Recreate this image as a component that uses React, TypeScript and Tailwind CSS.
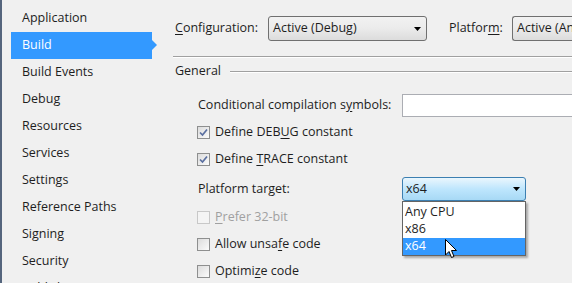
import React from "react";

const font = { fontFamily: '"Open Sans", "Noto Sans", sans-serif' };

function U({ children }: { children: React.ReactNode }) {
  return <span className="underline underline-offset-2">{children}</span>;
}

function Check({ checked, disabled }: { checked?: boolean; disabled?: boolean }) {
  return (
    <div
      className={
        "w-[13px] h-[13px] shrink-0 border flex items-center justify-center " +
        (disabled
          ? "border-[#c8c8c8] bg-[#f4f4f4]"
          : "border-[#8e8f8f] bg-gradient-to-br from-[#dcdcdc] to-[#fbfbfb]")
      }
    >
      {checked && (
        <svg width="9" height="9" viewBox="0 0 9 9">
          <path d="M1 4.5 L3.5 7 L8 1.5" stroke="#5a6fa0" strokeWidth="1.7" fill="none" />
        </svg>
      )}
    </div>
  );
}

function Arrow() {
  return (
    <svg width="7" height="4" viewBox="0 0 7 4">
      <path d="M0 0 H7 L3.5 4 Z" fill="#000" />
    </svg>
  );
}

export default function App() {
  const items = [
    "Application",
    "Build",
    "Build Events",
    "Debug",
    "Resources",
    "Services",
    "Settings",
    "Reference Paths",
    "Signing",
    "Security",
    "Publish",
  ];
  return (
    <div
      className="w-[572px] h-[283px] overflow-hidden bg-[#f0f0f0] flex text-[12.5px] text-[#1e1e1e]"
      style={font}
    >
      <div className="w-[2px] h-full bg-[#55657d] shrink-0" />
      <div className="w-[158px] shrink-0 pt-[5px] pl-[9px] flex flex-col">
        {items.map((it) => (
          <div key={it} className="relative h-[27px] shrink-0">
            {it === "Build" ? (
              <div className="relative h-[27px] w-[141px] bg-[#3399ff] text-white flex items-center pl-[11px]">
                {it}
                <div className="absolute right-[-5px] top-[8px] w-0 h-0 border-y-[5.5px] border-y-transparent border-l-[5px] border-l-[#3399ff]" />
              </div>
            ) : (
              <div className="h-[27px] flex items-center pl-[11px]">{it}</div>
            )}
          </div>
        ))}
      </div>
      <div className="flex-1 flex flex-col pl-[15px] min-w-0 overflow-hidden">
        <div className="flex items-center h-[25px] shrink-0 mt-[16px] whitespace-nowrap">
          <span className="w-[93px] shrink-0">
            <U>C</U>onfiguration:
          </span>
          <div className="w-[159px] h-[25px] shrink-0 rounded-[3px] border border-[#707070] bg-gradient-to-b from-[#f2f2f2] via-[#ebebeb] to-[#dcdcdc] flex items-center justify-between pl-[4px] pr-[5px]">
            <span>Active (Debug)</span>
            <Arrow />
          </div>
          <span className="ml-[22px] w-[63px] shrink-0">
            Platfor<U>m</U>:
          </span>
          <div className="w-[80px] h-[25px] shrink-0 rounded-l-[3px] border border-r-0 border-[#707070] bg-gradient-to-b from-[#f2f2f2] via-[#ebebeb] to-[#dcdcdc] flex items-center pl-[4px] overflow-hidden whitespace-nowrap">
            <span>Active (Any CPU)</span>
          </div>
        </div>
        <div className="mt-[15px] ml-[-2px] h-[2px] shrink-0 border-t border-[#a0a0a0] border-b border-b-white" />
        <div className="flex items-center h-[27px] shrink-0">
          <span>General</span>
          <div className="flex-1 ml-[9px] h-[2px] border-t border-[#a0a0a0] border-b border-b-white" />
        </div>
        <div className="pl-[23px] flex flex-col shrink-0 relative">
          <div className="flex items-center h-[27px] shrink-0 mt-[7px]">
            <span className="w-[204px] shrink-0 whitespace-nowrap">
              Conditional compilation s<U>y</U>mbols:
            </span>
            <div className="flex-1 h-[23px] bg-white border border-[#abadb3] border-r-0" />
          </div>
          <div className="flex items-center h-[27px] shrink-0 gap-[5px] ml-[-1px]">
            <Check checked />
            <span>
              Define DEB<U>U</U>G constant
            </span>
          </div>
          <div className="flex items-center h-[27px] shrink-0 gap-[5px] ml-[-1px]">
            <Check checked />
            <span>
              Define <U>T</U>RACE constant
            </span>
          </div>
          <div className="flex items-center h-[30px] shrink-0 mt-[1px]">
            <span className="w-[204px] shrink-0">
              Platform tar<U>g</U>et:
            </span>
            <div className="relative">
              <div className="w-[124px] h-[24px] rounded-[3px] border border-[#3c7fb1] bg-gradient-to-b from-[#eaf6fd] via-[#bee6fd] to-[#a7d9f5] flex items-center justify-between pl-[3px] pr-[5px]">
                <span>x64</span>
                <Arrow />
              </div>
              <div className="absolute left-0 top-[24px] w-[124px] bg-white border border-[#646464] shadow-[2px_2px_2px_rgba(0,0,0,0.3)] flex flex-col pt-[2px] z-10">
                <div className="h-[17px] flex items-center pl-[2px]">Any CPU</div>
                <div className="h-[17px] flex items-center pl-[2px]">x86</div>
                <div className="h-[17px] flex items-center pl-[2px] bg-[#3399ff] text-white">x64</div>
              </div>
              <svg
                className="absolute left-[43px] top-[62px] z-20"
                width="13"
                height="21"
                viewBox="0 0 13 21"
              >
                <path
                  d="M0.5 0.5 L0.5 16 L4 12.5 L6.5 18.5 L9 17.5 L6.5 11.5 L11.5 11.5 Z"
                  fill="#fff"
                  stroke="#000"
                  strokeWidth="1"
                />
              </svg>
            </div>
          </div>
          <div className="flex items-center h-[27px] shrink-0 gap-[5px] ml-[-1px] text-[#a0a0a0]">
            <Check disabled />
            <span>
              <U>P</U>refer 32-bit
            </span>
          </div>
          <div className="flex items-center h-[27px] shrink-0 gap-[5px] ml-[-1px]">
            <Check />
            <span>
              Allow unsa<U>f</U>e code
            </span>
          </div>
          <div className="flex items-center h-[27px] shrink-0 gap-[5px] ml-[-1px]">
            <Check />
            <span>
              Optimi<U>z</U>e code
            </span>
          </div>
        </div>
      </div>
    </div>
  );
}
